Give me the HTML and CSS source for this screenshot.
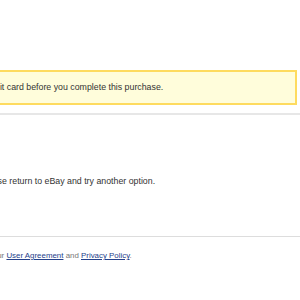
FILE: index.html
```html
<!DOCTYPE html>
<html lang="en">
<head>
<meta charset="utf-8">
<title>Checkout</title>
<link rel="stylesheet" href="styles.css">
</head>
<body>
<div class="page">
  <div class="notice">
    <p class="notice-text">Please add a credit card before you complete this purchase.</p>
  </div>
  <div class="rule-thick"></div>
  <p class="message">Please return to eBay and try another option.</p>
  <div class="rule-thin"></div>
  <p class="legal">By continuing, you agree to our <a href="#">User Agreement</a> and <a href="#">Privacy Policy</a>.</p>
</div>
</body>
</html>
```

FILE: styles.css
```css
html, body {
  margin: 0;
  padding: 0;
  background: #ffffff;
}
body {
  font-family: "Liberation Sans", Arial, sans-serif;
  color: #333333;
  overflow: hidden;
}
.page {
  display: flex;
  flex-direction: column;
  width: 300px;
}
.notice {
  margin: 70px 3px 0 -80px;
  height: 31px;
  padding: 0 0 0 7px;
  background: #fffddb;
  border: 2px solid #fedb5f;
  display: flex;
  align-items: center;
}
.notice-text {
  margin: 0 0 1px;
  font-size: 8.8px;
  line-height: 11px;
  white-space: nowrap;
}
.rule-thick {
  margin-top: 8px;
  height: 2px;
  background: #e7e7e7;
}
.message {
  margin: 61px 0 0 -20px;
  font-size: 8.8px;
  line-height: 11px;
  white-space: nowrap;
}
.rule-thin {
  margin-top: 49px;
  height: 1px;
  background: #dddddd;
}
.legal {
  margin: 13px 0 0 -105px;
  font-size: 7.9px;
  line-height: 11px;
  color: #777777;
  white-space: nowrap;
}
.legal a {
  color: #26428b;
  text-decoration: underline;
}
```
